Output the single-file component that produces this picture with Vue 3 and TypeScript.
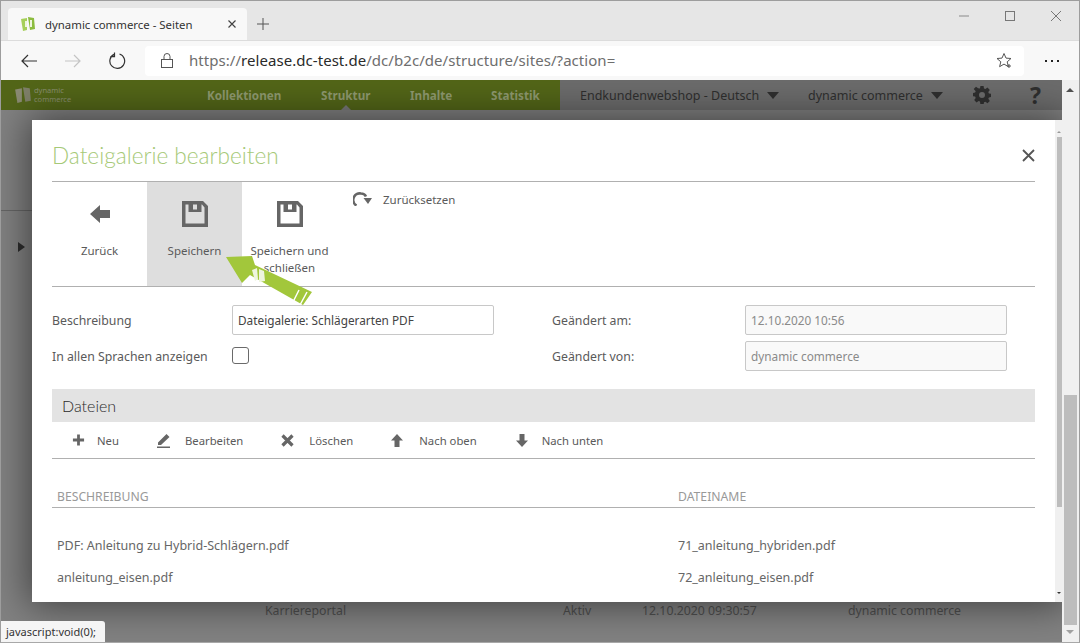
<script setup lang="ts">
const tools = [
  { label: 'Neu', icon: 'plus' },
  { label: 'Bearbeiten', icon: 'edit' },
  { label: 'Löschen', icon: 'del' },
  { label: 'Nach oben', icon: 'up' },
  { label: 'Nach unten', icon: 'down' },
]
const rows = [
  ['PDF: Anleitung zu Hybrid-Schlägern.pdf', '71_anleitung_hybriden.pdf'],
  ['anleitung_eisen.pdf', '72_anleitung_eisen.pdf'],
]
</script>

<template>
  <div class="win">
    <div class="tabstrip">
      <div class="tab">
        <svg class="fav" width="16" height="16" viewBox="0 0 16 16">
          <path d="M1 3l6-1v12l-4 1z" fill="#a6cf5a" />
          <path d="M8 1l6 1 1 11-5 1z" fill="#8cbc3f" />
          <path d="M5 5h2v6H5zM10 4h2v7h-2z" fill="#eef5de" />
        </svg>
        <span class="tabtitle">dynamic commerce - Seiten</span>
        <svg width="10" height="10" viewBox="0 0 10 10"><path d="M1.500 1.500l7 7M8.500 1.500l-7 7" stroke="#444" stroke-width="1.200" /></svg>
      </div>
      <svg class="newtab" width="14" height="14" viewBox="0 0 14 14"><path d="M7 1v12M1 7h12" stroke="#555" stroke-width="1" /></svg>
      <div class="caption">
        <svg width="12" height="12" viewBox="0 0 12 12"><path d="M1 6h10" stroke="#8a8a8a" /></svg>
        <svg width="12" height="12" viewBox="0 0 12 12"><rect x="1.500" y="1.500" width="9" height="9" fill="none" stroke="#777" /></svg>
        <svg width="12" height="12" viewBox="0 0 12 12"><path d="M1 1l10 10M11 1L1 11" stroke="#777" /></svg>
      </div>
    </div>
    <div class="toolbar">
      <svg class="nav back" width="18" height="16" viewBox="0 0 18 16"><path d="M17 8H2M8 2L2 8l6 6" fill="none" stroke="#333" stroke-width="1.200" /></svg>
      <svg class="nav fwd" width="18" height="16" viewBox="0 0 18 16"><path d="M1 8h15M10 2l6 6-6 6" fill="none" stroke="#c4c4c4" stroke-width="1.200" /></svg>
      <svg class="nav reload" width="18" height="18" viewBox="0 0 18 18"><path d="M6 2.400A7.400 7.400 0 1 0 11.500 2M6.500 0.500v4.200H2.300" fill="none" stroke="#333" stroke-width="1.200" /></svg>
      <div class="omnibox">
        <svg class="lock" width="14" height="17" viewBox="0 0 14 17"><rect x="1.500" y="7.500" width="11" height="8" fill="none" stroke="#555" /><path d="M4 7.500V4.500a3 3 0 0 1 6 0v3" fill="none" stroke="#555" /></svg>
        <span class="url"><span class="dim">https://</span><span class="host">release.dc-test.de</span><span class="dim">/dc/b2c/de/structure/sites/?action=</span></span>
        <svg class="star" width="17" height="17" viewBox="0 0 17 17"><path d="M8 1.500l2 4.600 5 .4-3.800 3.300 1.200 4.900L8 12.100l-4.400 2.600 1.200-4.900L1 6.500l5-.4z" fill="none" stroke="#555" /><path d="M13 12v4M11 14h4" stroke="#555" /></svg>
      </div>
      <span class="more"><i></i><i></i><i></i></span>
    </div>
    <div class="page">
      <div class="appbar">
        <div class="brand">
          <svg width="18" height="18" viewBox="0 0 16 16">
            <path d="M1 3l6-1v12l-4 1z" fill="#8b8b73" />
            <path d="M8 1l6 1 1 11-5 1z" fill="#7f8069" />
          </svg>
          <span class="brandtext">dynamic<br />commerce</span>
        </div>
        <nav class="mainnav">
          <span>Kollektionen</span>
          <span class="cur">Struktur</span>
          <span>Inhalte</span>
          <span>Statistik</span>
        </nav>
        <div class="rightnav">
          <span class="dd dd1">Endkundenwebshop - Deutsch<i class="caret"></i></span>
          <span class="dd dd2">dynamic commerce<i class="caret"></i></span>
          <svg class="gear" width="18" height="18" viewBox="0 0 18 18"><path fill="#2f2f2f" fill-rule="evenodd" d="M7.400 0h3.200l.4 2.500 1.400.6 2.100-1.500 2.300 2.300-1.500 2.100.6 1.400 2.500.4v3.200l-2.500.4-.6 1.400 1.500 2.100-2.300 2.300-2.100-1.500-1.400.6-.4 2.500H7.400L7 15.500l-1.400-.6-2.100 1.500-2.300-2.300 1.500-2.100-.6-1.400-2.500-.4V7l2.500-.4.6-1.400L.7 3.100 3 .8l2.100 1.500L7 2.500zM9 6a3 3 0 1 0 0 6 3 3 0 0 0 0-6z" /></svg>
          <span class="q">?</span>
        </div>
      </div>
      <div class="bgrule"></div>
      <svg class="bgcaret" width="7" height="10" viewBox="0 0 7 10"><path d="M0 0l7 5-7 5z" fill="#2d2d2d" /></svg>
      <span class="bgrow r1">Karriereportal</span>
      <span class="bgrow r2">Aktiv</span>
      <span class="bgrow r3">12.10.2020 09:30:57</span>
      <span class="bgrow r4">dynamic commerce</span>

      <div class="modal">
        <div class="modalbody">
          <header class="mhead">
            <h1>Dateigalerie bearbeiten</h1>
            <svg class="mclose" width="13" height="13" viewBox="0 0 13 13"><path d="M1 1l11 11M12 1L1 12" stroke="#555" stroke-width="1.800" /></svg>
          </header>
          <div class="actions">
            <button class="act">
              <svg width="24" height="24" viewBox="0 0 24 24"><path d="M2 12l10-9v5h10v8H12v5z" fill="#666" /></svg>
              <span>Zurück</span>
            </button>
            <button class="act active">
              <svg width="28" height="28" viewBox="0 0 28 28"><path fill="#666" fill-rule="evenodd" d="M1 1h21l5 5v21H1zM4.500 4.500v19h19V7.400L21 4.500h-.5V12h-13V4.500zM12 4.500v5h4v-5z" /></svg>
              <span>Speichern</span>
            </button>
            <button class="act">
              <svg width="28" height="28" viewBox="0 0 28 28"><path fill="#666" fill-rule="evenodd" d="M1 1h21l5 5v21H1zM4.500 4.500v19h19V7.400L21 4.500h-.5V12h-13V4.500zM12 4.500v5h4v-5z" /></svg>
              <span>Speichern und<br />schließen</span>
            </button>
            <button class="reset">
              <svg width="19" height="14" viewBox="0 0 19 14"><path d="M3.500 13.500A6.500 6.500 0 0 1 8 1.500c2.400 0 4 1 5 3" fill="none" stroke="#666" stroke-width="2.600" /><path d="M10.500 6H19l-4 6z" fill="#666" /></svg>
              <span>Zurücksetzen</span>
            </button>
            <svg class="pointer" width="88" height="52" viewBox="0 0 88 52">
              <path d="M0 2L26 1l3 9 57 27-9 13-53-30-8 8z" fill="#a2c73b" />
              <path d="M73 35l-6 12M81 37l-7 13" stroke="#fff" stroke-width="1.500" />
              <path d="M26 15l5-2 1 11-3 2zM33 14l5 2 1 10-6 1z" fill="#eef5de" />
            </svg>
          </div>
          <form class="fields" @submit.prevent>
            <div class="cell">
              <label>Beschreibung</label>
              <input class="txt wide" value="Dateigalerie: Schlägerarten PDF" />
            </div>
            <div class="cell right">
              <label>Geändert am:</label>
              <input class="txt ro" value="12.10.2020 10:56" readonly />
            </div>
            <div class="cell">
              <label>In allen Sprachen anzeigen</label>
              <span class="check"></span>
            </div>
            <div class="cell right">
              <label>Geändert von:</label>
              <input class="txt ro" value="dynamic commerce" readonly />
            </div>
          </form>
          <div class="sect">Dateien</div>
          <div class="subbar">
            <span v-for="t in tools" :key="t.label" class="tool" :class="'t-' + t.icon">
              <svg v-if="t.icon === 'plus'" width="13" height="14" viewBox="0 0 14 14"><path d="M7 1v12M1 7h12" stroke="#666" stroke-width="3" /></svg>
              <svg v-else-if="t.icon === 'edit'" width="15" height="16" viewBox="0 0 15 16"><path d="M1 10.500L9.500 2 12.500 5 4 13H1z M0 14.500h13V16H0z" fill="#666" /></svg>
              <svg v-else-if="t.icon === 'del'" width="13" height="13" viewBox="0 0 13 13"><path d="M1.500 1.500l10 10M11.500 1.500l-10 10" stroke="#666" stroke-width="3.200" /></svg>
              <svg v-else-if="t.icon === 'up'" width="12" height="13" viewBox="0 0 12 13"><path d="M6 0l6 6.500H8.500V13h-5V6.500H0z" fill="#666" /></svg>
              <svg v-else width="12" height="13" viewBox="0 0 12 13"><path d="M6 13L0 6.500h3.500V0h5v6.500H12z" fill="#666" /></svg>
              <span>{{ t.label }}</span>
            </span>
          </div>
          <div class="thead">
            <span>BESCHREIBUNG</span>
            <span>DATEINAME</span>
          </div>
          <div class="tbody">
            <div v-for="r in rows" :key="r[1]" class="trow">
              <span>{{ r[0] }}</span>
              <span>{{ r[1] }}</span>
            </div>
          </div>
        </div>
        <div class="mscroll"><i class="mup"></i><i class="mthumb"></i><i class="mdown"></i></div>
      </div>
      <div class="pscroll">
        <i class="pup"></i>
        <i class="pthumb"></i>
        <i class="pdown"></i>
      </div>
      <div class="status">javascript:void(0);</div>
    </div>
  </div>
</template>

<style>
html, body { margin: 0; padding: 0; background: #fff; overflow: hidden; }
</style>

<style scoped>
.win {
  width: 1080px; height: 643px; box-sizing: border-box; overflow: hidden;
  display: flex; flex-direction: column;
  border: 1px solid #9d9d9d; border-bottom-color: #a8a8a8;
  font-family: "Noto Sans", "Open Sans", sans-serif;
}
.tabstrip { height: 40px; flex: none; background: #e6e6e6; display: flex; align-items: flex-end; padding-left: 7px; box-sizing: border-box; border-bottom: 1px solid #dcdcdc; }
.tab { width: 239px; height: 32px; background: #f8f8f8; border-radius: 4px 4px 0 0; display: flex; align-items: center; padding: 0 10px 0 12px; box-sizing: border-box; }
.fav { margin-right: 9px; flex: none; }
.tabtitle { flex: 1; font-size: 11.400px; color: #333; white-space: nowrap; padding-top: 1px; }
.newtab { margin: 0 0 9px 9px; }
.caption { margin-left: auto; align-self: flex-start; display: flex; gap: 34px; padding: 9px 17px 0 0; }
.toolbar { height: 39px; flex: none; background: #f8f8f8; display: flex; align-items: center; padding: 0 0 0 19px; box-sizing: border-box; }
.nav { flex: none; }
.fwd { margin-left: 26px; }
.reload { margin-left: 26px; }
.omnibox { width: 879px; height: 30px; margin-left: 19px; background: #fff; border-radius: 4px; display: flex; align-items: center; padding: 0 11px 0 15px; box-sizing: border-box; }
.lock { flex: none; margin-right: 15px; }
.url { flex: 1; font-size: 15px; letter-spacing: .05px; line-height: 28px; padding-bottom: 2px; white-space: nowrap; font-family: "Noto Sans", sans-serif; }
.dim { color: #6e6e6e; }
.host { color: #2a2a2a; }
.star { flex: none; }
.more { margin-left: 21px; display: flex; gap: 4px; }
.more i { width: 2px; height: 2px; background: #222; display: block; }

.page { position: relative; flex: 1; min-height: 0; background: #828282; overflow: hidden; }
.appbar { height: 30px; display: flex; background: #536618; }
.brand { width: 206px; display: flex; align-items: center; padding-left: 13px; box-sizing: border-box; gap: 2px; }
.brandtext { font-size: 7.500px; line-height: 9px; color: #888e6e; }
.mainnav { width: 353px; display: flex; font-size: 11.700px; font-weight: 700; color: #8f9a70; align-items: center; }
.mainnav span:nth-child(1) { width: 114px; }
.mainnav span:nth-child(2) { width: 89px; position: relative; }
.mainnav span:nth-child(3) { width: 81px; }
.cur::after { content: ""; position: absolute; left: 20px; top: 18px; border: 5px solid transparent; border-top: 0; border-bottom-color: #7a7a7a; }
.rightnav { flex: 1; display: flex; align-items: center; background: #6c6c6c; color: #2f2f2f; font-size: 12.500px; position: relative; margin-right: 1px; }
.dd { white-space: nowrap; display: flex; align-items: center; }
.dd1 { margin-left: 20px; width: 228px; }
.dd2 { width: 165px; }
.caret { display: inline-block; margin-left: 8px; border: 6px solid transparent; border-bottom: 0; border-top: 7px solid #2f2f2f; }
.q { margin-left: 39px; font-size: 23px; line-height: 30px; font-weight: 700; color: #2f2f2f; }

.bgrule { position: absolute; left: 0; top: 130px; width: 31px; height: 1px; background: #666; }
.bgcaret { position: absolute; left: 17px; top: 162px; }
.bgrow { position: absolute; top: 522px; font-size: 12.300px; color: #4f4f4f; white-space: nowrap; }
.r1 { left: 264px; } .r2 { left: 562px; } .r3 { left: 641px; } .r4 { left: 847px; }

.modal { position: absolute; left: 31px; top: 40px; width: 1031px; height: 482px; display: flex; background: #fff; overflow: hidden; color: #5a5a5a; box-shadow: 0 0 36px 4px rgba(0, 0, 0, .5); }
.modalbody { flex: 1; padding: 0 20px; min-width: 0; font-size: 12.500px; }
.mhead { height: 61px; display: flex; align-items: center; justify-content: space-between; border-bottom: 1px solid #b0b0b0; }
.mhead h1 { margin: 10px 0 0; font-size: 22.600px; font-weight: 300; color: #a6c977; font-family: Lato, "Noto Sans", sans-serif; }
.mclose { margin: 10px 0 0 0; }
.actions { position: relative; display: flex; height: 104px; border-bottom: 1px solid #b0b0b0; font-size: 11.500px; }
.act { width: 95px; border: 0; background: none; padding: 0; margin: 0; font: inherit; color: inherit; display: flex; flex-direction: column; align-items: center; line-height: 17px; }
.act svg { height: 28px; margin-top: 18px; }
.act span { margin-top: 14px; text-align: center; }
.act.active { background: #dedede; }
.reset { border: 0; background: none; padding: 0; font: inherit; color: inherit; margin: 10px 0 0 16px; display: flex; align-items: flex-start; gap: 11px; line-height: 15px; height: 20px; }
.pointer { position: absolute; left: 174px; top: 73px; }
.fields { display: grid; grid-template-columns: 500px 1fr; grid-auto-rows: 30px; row-gap: 6px; padding-top: 18px; height: 84px; align-content: start; }
.cell { display: flex; align-items: center; height: 30px; }
.cell label { width: 180px; flex: none; font-size: 12.300px; }
.cell.right label { width: 193px; }
.txt { height: 30px; box-sizing: border-box; border: 1px solid #c8c8c8; border-radius: 2px; padding: 0 5px; font: inherit; font-size: 11.800px; color: #444; outline: none; background: #fff; }
.wide { width: 262px; }
.ro { width: 262px; background: #f9f9f9; color: #8a8a8a; }
.check { width: 17px; height: 17px; border: 1px solid #6a6a6a; border-radius: 3px; box-sizing: border-box; margin-top: -2px; }
.sect { height: 33px; background: #e3e3e3; padding-left: 10px; font-size: 16px; font-weight: 300; line-height: 33px; font-family: Lato, "Noto Sans", sans-serif; color: #2a2a2a; }
.subbar { height: 37px; display: flex; align-items: center; box-sizing: border-box; border-bottom: 1px solid #b0b0b0; font-size: 11.300px; }
.tool { display: flex; align-items: center; }
.t-plus { margin-left: 20px; gap: 12px; }
.t-edit { margin-left: 38px; gap: 13px; }
.t-del { margin-left: 38px; gap: 15px; }
.t-up { margin-left: 38px; gap: 16px; }
.t-down { margin-left: 39px; gap: 14px; }
.thead { display: grid; grid-template-columns: 621px 1fr; padding: 30px 0 2px 5px; border-bottom: 1px solid #b0b0b0; font-size: 12.200px; line-height: 16px; color: #999; }
.tbody { padding: 22px 0 0 5px; }
.trow { display: grid; grid-template-columns: 621px 1fr; height: 32px; line-height: 32px; color: #666; }
.mscroll { width: 8px; flex: none; background: #f0f0f0; position: relative; }
.mup { position: absolute; left: 2px; top: 11px; border: 2px solid transparent; border-bottom-color: #999; border-top: 0; }
.mthumb { position: absolute; left: 2px; top: 17px; width: 5px; height: 370px; background: #bdbdbd; }
.mdown { position: absolute; left: 2px; top: 472px; border: 2px solid transparent; border-top-color: #333; border-bottom: 0; }
.pscroll { position: absolute; right: 0; top: 0; bottom: 0; width: 17px; background: #f0f0f0; }
.pup { position: absolute; left: 4px; top: 8px; border: 4px solid transparent; border-top: 0; border-bottom-color: #505050; }
.pthumb { position: absolute; left: 2px; top: 315px; width: 13px; height: 230px; background: #bdbdbd; }
.pdown { position: absolute; left: 4px; top: 550px; border: 4px solid transparent; border-bottom: 0; border-top-color: #a0a0a0; }
.status { position: absolute; left: 0; bottom: 0; height: 21px; padding: 0 9px 0 5px; background: #f5f5f5; border-radius: 0 3px 0 0; font-size: 11px; line-height: 21px; color: #333; }
</style>
